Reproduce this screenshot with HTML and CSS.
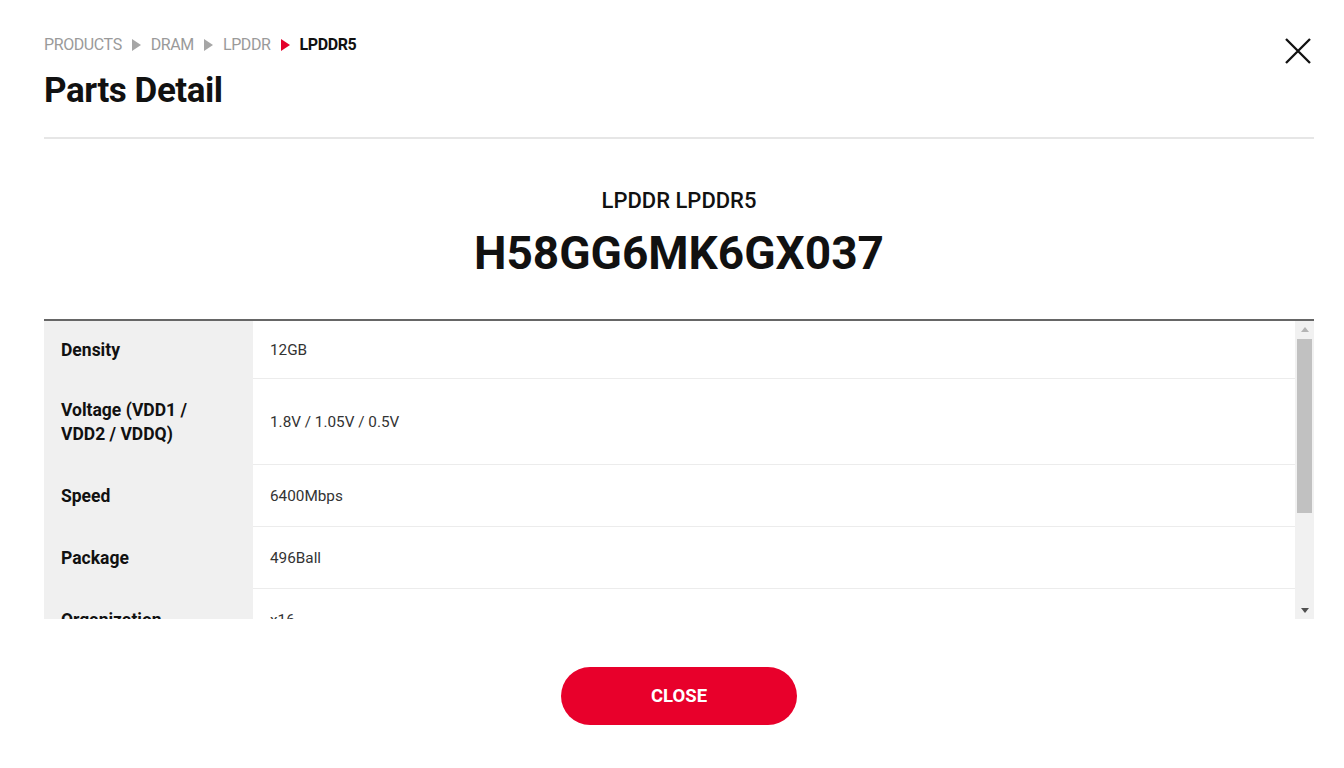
FILE: index.html
```html
<!DOCTYPE html>
<html lang="en">
<head>
<meta charset="UTF-8" />
<meta name="viewport" content="width=device-width, initial-scale=1" />
<title>Parts Detail</title>
<link rel="stylesheet" href="styles.css">
</head>
<body>

<div class="modal">
  <div class="modal-head">
    <div class="head-text">
      <div class="crumbs">
        <span>PRODUCTS</span>
        <svg class="arrow" width="9" height="12" viewBox="0 0 9 12"><path d="M0 0 L9 6 L0 12 Z" fill="#a6a6a6"/></svg>
        <span>DRAM</span>
        <svg class="arrow" width="9" height="12" viewBox="0 0 9 12"><path d="M0 0 L9 6 L0 12 Z" fill="#a6a6a6"/></svg>
        <span>LPDDR</span>
        <svg class="arrow" width="9" height="12" viewBox="0 0 9 12"><path d="M0 0 L9 6 L0 12 Z" fill="#e4002b"/></svg>
        <span class="current">LPDDR5</span>
      </div>
      <h1 class="title">Parts Detail</h1>
    </div>
    <button class="close-x" title="Close">
      <svg width="28" height="28" viewBox="0 0 28 28"><path d="M2 2 L26 26 M26 2 L2 26" stroke="#111" stroke-width="2.3" fill="none"/></svg>
    </button>
  </div>

  <div class="part-head">
    <div class="part-family">LPDDR LPDDR5</div>
    <div class="part-number">H58GG6MK6GX037</div>
  </div>

  <div class="spec-box">
    <div class="spec-wrap">
      <table class="spec">
        <tr><th>Density</th><td>12GB</td></tr>
        <tr><th>Voltage (VDD1 /<br>VDD2 / VDDQ)</th><td>1.8V / 1.05V / 0.5V</td></tr>
        <tr><th>Speed</th><td>6400Mbps</td></tr>
        <tr><th>Package</th><td>496Ball</td></tr>
        <tr><th>Organization</th><td>x16</td></tr>
      </table>
    </div>
    <div class="scrollbar">
      <div class="sb-btn">
        <svg width="8" height="5" viewBox="0 0 8 5"><path d="M0 5 L4 0 L8 5 Z" fill="#b4b4b4"/></svg>
      </div>
      <div class="sb-track"><div class="sb-thumb"></div></div>
      <div class="sb-btn">
        <svg width="8" height="5" viewBox="0 0 8 5"><path d="M0 0 L4 5 L8 0 Z" fill="#505050"/></svg>
      </div>
    </div>
  </div>

  <div class="actions">
    <button class="close-btn">CLOSE</button>
  </div>
</div>

</body>
</html>
```

FILE: styles.css
```css
body {
  margin: 0;
  background: #fff;
  color: #111;
  font-family: Roboto, "Liberation Sans", Arial, sans-serif;
}

.modal {
  padding: 36px 30px 0 44px;
}

.modal-head {
  display: flex;
  justify-content: space-between;
  align-items: flex-start;
  padding-bottom: 26px;
  border-bottom: 2px solid #e6e6e6;
}

.crumbs {
  display: flex;
  align-items: center;
  gap: 9px;
  font-size: 16px;
  line-height: 18px;
  color: #9a9a9a;
  letter-spacing: -0.4px;
}

.crumbs .current {
  color: #111;
  font-weight: 700;
}

.arrow {
  display: block;
  margin: 0 1px;
}

.title {
  margin: 17px 0 0;
  font-size: 35px;
  line-height: 40px;
  font-weight: 700;
  letter-spacing: -0.45px;
}

.close-x {
  background: none;
  border: none;
  padding: 0;
  margin: 1px 2px 0 0;
  cursor: pointer;
}

.close-x svg {
  display: block;
}

.part-head {
  text-align: center;
  padding: 49px 0 39px;
}

.part-family {
  font-size: 22px;
  line-height: 26px;
  font-weight: 500;
}

.part-number {
  margin-top: 12px;
  font-size: 46px;
  line-height: 54px;
  font-weight: 700;
}

.spec-box {
  display: flex;
  height: 298px;
  border-top: 2px solid #666;
}

.spec-wrap {
  flex: 1;
  overflow: hidden;
}

.spec {
  width: 100%;
  border-collapse: collapse;
}

.spec th,
.spec td {
  padding: 18.5px 17px;
  line-height: 24px;
  text-align: left;
  vertical-align: middle;
  border-bottom: 1px solid #ececec;
}

.spec tr:first-child th,
.spec tr:first-child td {
  padding-top: 16.5px;
  padding-bottom: 16.5px;
}

.spec th {
  width: 175px;
  background: #f0f0f0;
  font-size: 17.5px;
  font-weight: 700;
  color: #111;
  border-bottom-color: #f0f0f0;
}

.spec td {
  font-size: 15.3px;
  color: #333;
}

.scrollbar {
  width: 19px;
  display: flex;
  flex-direction: column;
  background: #f1f1f1;
  padding: 0 2px;
  box-sizing: border-box;
}

.sb-btn {
  height: 17px;
  display: flex;
  align-items: center;
  justify-content: center;
}

.sb-btn svg {
  display: block;
}

.sb-track {
  flex: 1;
  padding-top: 1px;
}

.sb-thumb {
  height: 174px;
  background: #c1c1c1;
}

.actions {
  display: flex;
  justify-content: center;
  padding-top: 48px;
}

.close-btn {
  width: 236px;
  height: 58px;
  border: none;
  border-radius: 29px;
  background: #e8002b;
  color: #fff;
  font-family: Roboto, "Liberation Sans", Arial, sans-serif;
  font-size: 18.5px;
  font-weight: 700;
  cursor: pointer;
}
```
